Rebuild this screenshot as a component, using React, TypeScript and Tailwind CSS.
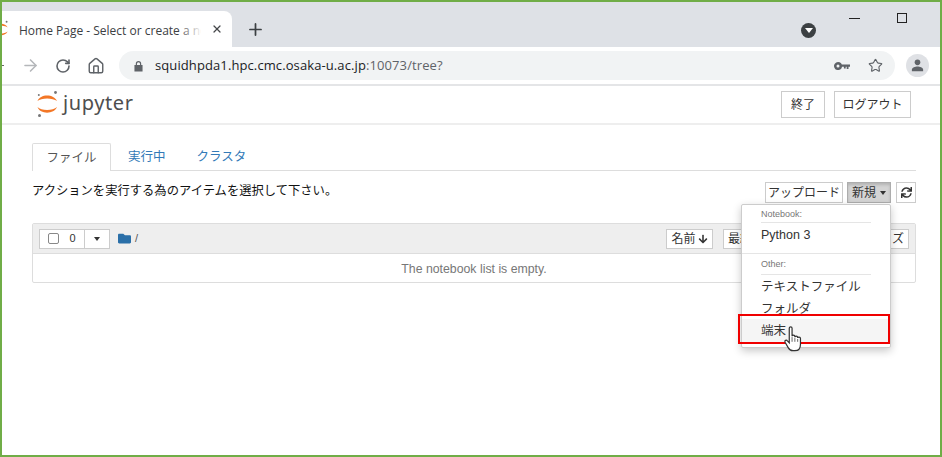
import { ArrowRight, Home, Plus, RotateCw, Star, X } from 'lucide-react';
import { FaArrowDown, FaFolder, FaSync } from 'react-icons/fa';

const JP = "font-['Liberation_Sans','Noto_Sans_CJK_JP',sans-serif]";

const JupyterMark = ({ className }: { className: string }) => (
  <svg viewBox="0 0 22 28" className={className}>
    <path d="M.5 11C3 3.500 17 3.500 20 11C16 7.500 4 7.500 .5 11Z" fill="#f37726" />
    <path d="M.5 17C3 24.500 17 24.500 20 17C16 21 4 21 .5 17Z" fill="#f37726" />
    <circle cx="18.500" cy="2.500" r="1.400" fill="#767677" />
    <circle cx="1.800" cy="5" r="1" fill="#767677" />
    <circle cx="2.500" cy="25.500" r="1.500" fill="#767677" />
  </svg>
);

const HandCursor = () => (
  <svg viewBox="0 0 20 30" className="absolute left-[783px] top-[325px] h-[28px] w-[20px]">
    <path
      d="M6 3.500c0-2 3-2 3 0V12c0-1.500 3-1.500 3 0v1c0-1.500 3-1.500 3 0v1c0-1.300 3-1.300 3 .5v6c0 4-2 7-6 7h-2c-3 0-4-1-5-3l-3.500-6c-1-2 1.500-3 2.500-1.500L6 19Z"
      fill="#fff"
      stroke="#333"
      strokeWidth="1.300"
    />
    <path d="M9 13v5M12 14v4M15 15v3" stroke="#333" strokeWidth="0.8" />
  </svg>
);

const ChromeBar = () => (
  <>
    <div className="flex h-[45px] items-end bg-[#dee1e6]">
      <div className="relative flex h-9 w-[230px] items-center overflow-hidden rounded-tr-lg bg-white pl-[17px] pt-[3px] text-[#3c4043]">
        <JupyterMark className="absolute -left-[8px] top-[9px] h-[19px] w-[15px]" />
        <span className="w-[182px] overflow-hidden whitespace-nowrap font-['Open_Sans',sans-serif] text-[12px]">
          Home Page - Select or create a notebook
        </span>
        <div className="absolute left-[176px] top-0 h-full w-6 bg-gradient-to-r from-transparent to-white" />
        <X size={12} strokeWidth={2.5} className="absolute left-[209px] top-[12px] text-[#45474a]" />
      </div>
      <Plus size={19} strokeWidth={2.2} className="mb-[8px] ml-[14px] text-[#3c4043]" />
      <div className="relative h-full flex-1">
        <div className="absolute right-[124px] top-[21px] flex size-[15px] items-center justify-center rounded-full bg-[#3c4043]">
          <div className="h-0 w-0 border-x-[4px] border-t-[5px] border-x-transparent border-t-white" />
        </div>
        <div className="absolute right-[80px] top-[16px] h-px w-[11px] bg-[#222]" />
        <div className="absolute right-[33px] top-[11px] size-[10px] border border-[#222]" />
      </div>
    </div>
    <div className="flex h-[39px] items-center border-b-2 border-[#e4e5e7] bg-white">
      <div className="h-px w-[2px] bg-[#666]" />
      <ArrowRight size={19} className="ml-[17px] text-[#b5b7ba]" />
      <RotateCw size={16} strokeWidth={2.4} className="ml-[15px] text-[#5f6368]" />
      <Home size={18} strokeWidth={1.9} className="ml-[16px] text-[#5f6368]" />
      <div className="ml-[14px] flex h-[29px] w-[776px] items-center rounded-full bg-[#f1f3f4] pl-[15px] pr-[12px]">
        <svg viewBox="0 0 10 12" className="h-3 w-[9px]">
          <path d="M2 5V3.500a3 3 0 0 1 6 0V5h1.500v7H.5V5Zm1.300 0h3.400V3.500a1.700 1.700 0 0 0-3.400 0Z" fill="#5f6368" />
        </svg>
        <span className="ml-[12px] font-['Open_Sans',sans-serif] text-[13px] tracking-[0.1px] text-[#202124]">
          squidhpda1.hpc.cmc.osaka-u.ac.jp<span className="text-[#5f6368]">:10073/tree?</span>
        </span>
        <svg viewBox="0 0 16 8" className="ml-auto h-2 w-4">
          <path d="M4 0a4 4 0 1 1-3.800 5.200A4 4 0 0 1 4 0Zm0 2.500a1.500 1.500 0 1 0 0 3 1.500 1.500 0 0 0 0-3ZM7.500 2.500H16v2.300h-1.500V7h-1.800V4.800h-1V6.500H9.900V4.800H7.500Z" fill="#5f6368" />
        </svg>
        <Star size={15} strokeWidth={1.8} className="ml-[18px] text-[#5f6368]" />
      </div>
      <div className="ml-[11px] flex size-[23px] items-center justify-center rounded-full bg-[#dfe1e5]">
        <svg viewBox="0 0 16 16" className="size-[15px]">
          <circle cx="8" cy="4.600" r="3" fill="#5f6368" />
          <path d="M2 14v-1.500c0-2.400 3.700-3.500 6-3.500s6 1.100 6 3.500V14Z" fill="#5f6368" />
        </svg>
      </div>
    </div>
  </>
);

const JupyterHeader = () => (
  <div className="flex h-[39px] items-start border-b-2 border-[#eeeeee] pl-[35px] pr-[29px]">
    <JupyterMark className="mt-[4px] h-[28px] w-[22px]" />
    <span className="ml-[4px] mt-[3px] font-['Noto_Sans',sans-serif] text-[20px] leading-[28px] tracking-[0.6px] text-[#4e4e4e]">
      jupyter
    </span>
    <button className="ml-auto mt-[5px] h-[27px] w-[44px] border border-[#ccc] text-xs text-[#333]">終了</button>
    <button className="ml-[9px] mt-[5px] h-[27px] w-[77px] border border-[#ccc] text-xs text-[#333]">ログアウト</button>
  </div>
);

const FileTabs = () => (
  <div className="flex h-[28px] border-b border-[#ddd] text-[12.5px] leading-[29px]">
    <div className="h-[28px] w-[79px] rounded-t-[2px] border border-b-0 border-[#ddd] bg-white text-center text-[#555]">ファイル</div>
    <div className="ml-[17px] text-[#337ab7]">実行中</div>
    <div className="ml-[31px] text-[#337ab7]">クラスタ</div>
  </div>
);

const ActionRow = () => (
  <div className="flex h-[52px] items-start pt-[11px]">
    <span className="pt-px text-[12.3px] leading-4 text-[#111]">アクションを実行する為のアイテムを選択して下さい。</span>
    <button className="ml-auto h-[21px] w-[78px] border border-[#ccc] text-xs leading-none text-[#333]">アップロード</button>
    <button className="ml-[4px] flex h-[21px] w-[44px] items-center justify-center gap-1 border border-[#adadad] bg-[#d4d4d4] text-xs leading-none text-[#333] shadow-[inset_0_2px_3px_rgba(0,0,0,0.15)]">
      新規
      <span className="h-0 w-0 border-x-[3px] border-t-[4px] border-x-transparent border-t-[#333]" />
    </button>
    <button className="ml-[5px] flex h-[21px] w-5 items-center justify-center border border-[#ccc] text-[#333]">
      <FaSync size={11} />
    </button>
  </div>
);

const FileList = () => (
  <div className="h-[60px] rounded-[2px] border border-[#ddd] text-xs">
    <div className="flex h-[30px] items-center border-b border-[#ddd] bg-[#eeeeee] pl-[6px] pr-[6px]">
      <div className="flex h-5 w-[46px] items-center justify-center gap-[10px] border border-[#ccc] bg-white text-[11px] font-medium text-[#333]">
        <span className="size-[11px] rounded-[2px] border border-[#888]" />
        0
      </div>
      <div className="flex h-[20px] w-[25px] items-center justify-center border border-l-0 border-[#ccc] bg-white">
        <span className="h-0 w-0 border-x-[3px] border-t-[4px] border-x-transparent border-t-[#333]" />
      </div>
      <FaFolder size={13} className="ml-[8px] text-[#2a6fa8]" />
      <span className="ml-[4px] text-[11px] text-[#555]">/</span>
      <button className="ml-auto h-5 w-[47px] border border-[#ccc] bg-white text-[#333]">
        <span className="flex items-center justify-center gap-[2px]">
          名前
          <FaArrowDown size={10} />
        </span>
      </button>
      <button className="ml-[10px] h-5 w-[186px] overflow-hidden whitespace-nowrap border border-[#ccc] bg-white pl-[4px] pr-[4px] text-[#333]">
        <span className="flex justify-between">
          <span>最終更新</span>
          <span>サイズ</span>
        </span>
      </button>
    </div>
    <div className="h-[28px] text-center font-['Liberation_Sans',sans-serif] text-[12.3px] leading-[31px] text-[#777]">The notebook list is empty.</div>
  </div>
);

const NewMenu = () => (
  <div className="absolute left-[741px] top-[204px] h-[144px] w-[150px] rounded-[2px] border border-[#ccc] bg-white text-[12.5px] text-[#333] shadow-[0_3px_8px_rgba(0,0,0,0.22)]">
    <div className="mx-[19px] h-[18px] border-b border-[#e5e5e5] text-[9px] leading-[18px] text-[#777]">Notebook:</div>
    <div className="h-[30px] pl-[19px] leading-[24px]">Python 3</div>
    <div className="h-px bg-[#e5e5e5]" />
    <div className="mx-[19px] h-[21px] border-b border-[#e5e5e5] text-[9px] leading-[21px] text-[#777]">Other:</div>
    <div className="h-[22px] pl-[19px] leading-[24px]">テキストファイル</div>
    <div className="h-[22px] pl-[19px] leading-[24px]">フォルダ</div>
    <div className="h-[24px] bg-[#f5f5f5] pl-[19px] leading-[24px]">端末</div>
  </div>
);

export default function App() {
  return (
    <div className={`relative h-[457px] w-[942px] overflow-hidden bg-white ${JP}`}>
      <div className="flex h-[455px] flex-col border-x-2 border-t-2 border-[#70ad47]">
        <ChromeBar />
        <JupyterHeader />
        <div className="pl-[30px] pr-[24px] pt-[18px]">
          <FileTabs />
          <ActionRow />
          <FileList />
        </div>
      </div>
      <div className="h-[2px] bg-[#70ad47]" />
      <NewMenu />
      <div className="absolute left-[738px] top-[314px] h-[30px] w-[152px] border-2 border-[#f00000]" />
      <HandCursor />
    </div>
  );
}
